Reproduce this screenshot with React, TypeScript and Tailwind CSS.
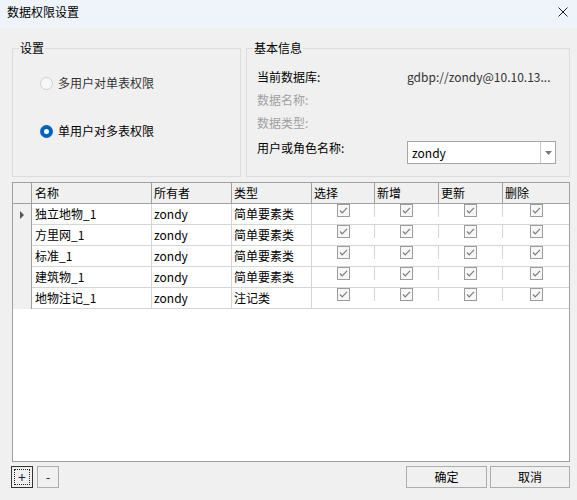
import React from "react";

const rows = [
  { name: "独立地物_1", owner: "zondy", type: "简单要素类" },
  { name: "方里网_1", owner: "zondy", type: "简单要素类" },
  { name: "标准_1", owner: "zondy", type: "简单要素类" },
  { name: "建筑物_1", owner: "zondy", type: "简单要素类" },
  { name: "地物注记_1", owner: "zondy", type: "注记类" },
];

function Check() {
  return (
    <svg width="13" height="13" viewBox="0 0 13 13">
      <rect x="0.5" y="0.5" width="12" height="12" fill="#f7f7f7" stroke="#9c9c9c" />
      <polyline points="3,6.5 5.2,8.8 10,3.8" fill="none" stroke="#7c7c7c" strokeWidth="1.2" />
    </svg>
  );
}

function CheckCell({ last }: { last?: boolean }) {
  return (
    <div className={last ? "flex items-center justify-center" : "flex items-center justify-center border-r border-[#d5d5d5]"}>
      <Check />
    </div>
  );
}

export default function App() {
  return (
    <div className="w-[577px] h-[500px] bg-[#f0f0f0] flex flex-col text-[12px] leading-[16px] text-black font-['Noto_Sans_CJK_SC','Noto_Sans',sans-serif]">
      <div className="h-[28px] shrink-0 bg-[#eef4f9] flex items-center justify-between pl-[7px] pr-[9px]">
        <span className="text-[12px] -mt-[4px]">数据权限设置</span>
        <svg width="10" height="10" viewBox="0 0 10 10" className="-mt-[4px]">
          <path d="M0.5 0.5 L9.5 9.5 M9.5 0.5 L0.5 9.5" stroke="#222" strokeWidth="1" />
        </svg>
      </div>
      <div className="flex-1 flex flex-col pl-[12px] pr-[7px] pt-[12px]">
        <div className="flex gap-[5px] h-[137px] shrink-0">
          <fieldset className="w-[229px] h-[137px] border border-[#dcdcdc] min-w-0">
            <legend className="ml-[6px] px-[1px] leading-[16px]">设置</legend>
            <div className="flex flex-col pl-[27px] pt-[19px] gap-[32px]">
              <div className="flex items-center h-[16px]">
                <span className="w-[13px] h-[13px] rounded-full border border-[#cfcfcf] bg-[#f7f7f7]" />
                <span className="ml-[5px] text-[#333]">多用户对单表权限</span>
              </div>
              <div className="flex items-center h-[16px]">
                <span className="w-[13px] h-[13px] rounded-full bg-[#0063c4] flex items-center justify-center">
                  <span className="w-[5px] h-[5px] rounded-full bg-white" />
                </span>
                <span className="ml-[5px]">单用户对多表权限</span>
              </div>
            </div>
          </fieldset>
          <fieldset className="w-[324px] h-[137px] border border-[#dcdcdc] min-w-0">
            <legend className="ml-[6px] px-[1px] leading-[16px]">基本信息</legend>
            <div className="flex flex-col pl-[10px] pt-[13px]">
              <div className="flex h-[16px]">
                <span className="w-[150px]">当前数据库:</span>
                <span className="text-[#333]">gdbp://zondy@10.10.13...</span>
              </div>
              <div className="flex h-[16px] mt-[7px] text-[#a0a0a0]">
                <span className="w-[150px]">数据名称:</span>
              </div>
              <div className="flex h-[16px] mt-[7px] text-[#a0a0a0]">
                <span className="w-[150px]">数据类型:</span>
              </div>
              <div className="flex mt-[9px] items-start">
                <span className="w-[150px] h-[16px]">用户或角色名称:</span>
                <div className="mt-[1px] w-[149px] h-[23px] border border-[#a6a6a6] bg-white flex">
                  <span className="flex-1 pl-[4px] flex items-center">zondy</span>
                  <span className="w-[15px] border-l border-[#c8c8c8] flex items-center justify-center">
                    <svg width="7" height="4" viewBox="0 0 7 4">
                      <path d="M0 0 L7 0 L3.5 4 Z" fill="#7a7a7a" />
                    </svg>
                  </span>
                </div>
              </div>
            </div>
          </fieldset>
        </div>

        <div className="mt-[5px] h-[280px] shrink-0 border border-[#a0a0a0] bg-white flex flex-col">
          <div className="grid grid-cols-[19px_120px_80px_80px_63px_64px_64px_1fr] h-[21px] bg-[#f0f0f0] border-b border-[#a0a0a0]">
            <div className="border-r border-[#a0a0a0]" />
            <div className="border-r border-[#a0a0a0] pl-[3px] flex items-center">名称</div>
            <div className="border-r border-[#a0a0a0] pl-[2px] flex items-center">所有者</div>
            <div className="border-r border-[#a0a0a0] pl-[2px] flex items-center">类型</div>
            <div className="border-r border-[#a0a0a0] pl-[2px] flex items-center">选择</div>
            <div className="border-r border-[#a0a0a0] pl-[2px] flex items-center">新增</div>
            <div className="border-r border-[#a0a0a0] pl-[2px] flex items-center">更新</div>
            <div className="pl-[2px] flex items-center">删除</div>
          </div>
          {rows.map((r, i) => (
            <div
              key={i}
              className="grid grid-cols-[19px_120px_80px_80px_63px_64px_64px_1fr] h-[21px]"
            >
              <div className="bg-[#f0f0f0] border-r border-[#a0a0a0] flex items-center pl-[7px]">
                {i === 0 && (
                  <svg width="4" height="8" viewBox="0 0 4 8">
                    <path d="M0 0 L4 4 L0 8 Z" fill="#555" />
                  </svg>
                )}
              </div>
              <div className="border-r border-b border-[#d5d5d5] pl-[3px] flex items-center">{r.name}</div>
              <div className="border-r border-b border-[#d5d5d5] pl-[2px] flex items-center">{r.owner}</div>
              <div className="border-r border-b border-[#d5d5d5] pl-[2px] flex items-center">{r.type}</div>
              <div className="border-b border-[#d5d5d5] flex"><div className="flex-1 flex"><CheckCellWrap /></div></div>
              <div className="border-b border-[#d5d5d5] flex"><div className="flex-1 flex"><CheckCellWrap /></div></div>
              <div className="border-b border-[#d5d5d5] flex"><div className="flex-1 flex"><CheckCellWrap /></div></div>
              <div className="border-b border-[#d5d5d5] flex"><div className="flex-1 flex"><CheckCellWrap last /></div></div>
            </div>
          ))}
        </div>

        <div className="mt-[4px] h-[22px] flex items-stretch -ml-[1px] pr-[0px]">
          <button className="w-[22px] h-[22px] border border-[#333] bg-[#f0f0f0] p-[2px] flex">
            <span className="flex-1 border border-dotted border-[#222] flex items-center justify-center text-[#223] leading-none text-[14px]">+</span>
          </button>
          <button className="ml-[4px] w-[22px] h-[22px] border border-[#adadad] bg-[#f0f0f0] flex items-center justify-center leading-none">-</button>
          <div className="flex-1" />
          <button className="w-[81px] h-[22px] border border-[#adadad] bg-[#f0f0f0] flex items-center justify-center">确定</button>
          <button className="ml-[3px] w-[80px] h-[22px] border border-[#adadad] bg-[#f0f0f0] flex items-center justify-center">取消</button>
        </div>
      </div>
    </div>
  );
}

function CheckCellWrap({ last }: { last?: boolean }) {
  return (
    <div className="flex-1 flex">
      <div className="flex-1">
        <CheckCell last={last} />
      </div>
    </div>
  );
}
